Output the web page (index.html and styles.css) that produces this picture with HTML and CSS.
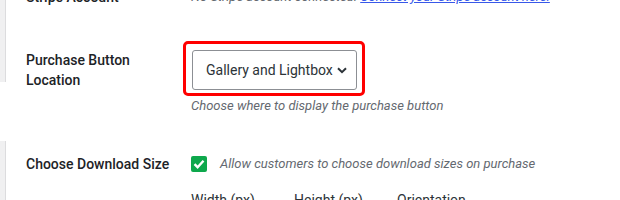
FILE: index.html
```html
<!DOCTYPE html>
<html>
<head>
    <meta charset="UTF-8">
    <title>Settings</title>
    <link rel="stylesheet" href="styles.css">
</head>
<body>
    <div class="wrap">
        <div class="rail">
            <span class="seg top"></span>
            <span class="seg bottom"></span>
        </div>
        <div class="form">
            <div class="row stripe">
                <div class="label">Stripe Account</div>
                <div class="field">
                    <p class="desc">No Stripe account connected. <a href="javascript:;">Connect your Stripe account here.</a></p>
                </div>
            </div>
            <div class="row location">
                <div class="label">Purchase Button Location</div>
                <div class="field">
                    <div class="mark">
                        <div class="select">
                            <span>Gallery and Lightbox</span>
                            <svg width="10" height="7" viewBox="0 0 10 7"><path d="M1 1.2 5 5.2 9 1.2" fill="none" stroke="#2c3338" stroke-width="2"/></svg>
                        </div>
                    </div>
                    <p class="desc">Choose where to display the purchase button</p>
                </div>
            </div>
            <div class="row sizes">
                <div class="label">Choose Download Size</div>
                <div class="field">
                    <label class="check">
                        <span class="box"><svg width="12" height="10" viewBox="0 0 12 10"><path d="M1.5 5.2 4.6 8.2 10.5 1.8" fill="none" stroke="#fff" stroke-width="2.4"/></svg></span>
                        <span class="desc">Allow customers to choose download sizes on purchase</span>
                    </label>
                    <div class="cols">
                        <span>Width (px)</span>
                        <span>Height (px)</span>
                        <span>Orientation</span>
                    </div>
                </div>
            </div>
        </div>
    </div>
</body>
</html>
```

FILE: styles.css
```css
*{margin: 0;padding: 0;box-sizing: border-box;}
body{
    background: #fff;
    font-family: Roboto, "Noto Sans", sans-serif;
    color: #1d2327;
    height: 200px;
    overflow: hidden;
}
.wrap{
    display: flex;
    height: 200px;
}
.rail{
    width: 6px;
    display: flex;
    flex-direction: column;
}
.rail .seg{
    display: block;
    background: #f0f0f1;
    border-right: 1px solid #dcdcde;
}
.rail .top{
    height: 82px;
}
.rail .bottom{
    margin-top: 59px;
    flex: 1;
}
.form{
    padding-left: 20px;
    margin-top: -13px;
}
.row{
    display: grid;
    grid-template-columns: 165px 1fr;
}
.label{
    font-size: 14px;
    font-weight: 500;
    line-height: 20px;
    width: 150px;
}
.desc{
    font-size: 13px;
    font-style: italic;
    color: #646970;
    line-height: 20px;
    white-space: nowrap;
}
.desc a{
    color: #3858e9;
}
.location{
    margin-top: 34px;
}
.location .label{
    padding-top: 9px;
}
.mark{
    display: inline-block;
    margin-left: -8px;
    border: 3px solid #f00;
    border-radius: 5px;
    padding: 6px 5px 3px 6px;
}
.select{
    display: flex;
    align-items: center;
    width: 165px;
    height: 40px;
    padding: 0 8px 0 13px;
    border: 1px solid #8c8f94;
    border-radius: 3px;
    font-size: 14px;
    color: #2c3338;
    white-space: nowrap;
}
.select svg{
    flex-shrink: 0;
    margin-left: 4px;
}
.sizes{
    margin-top: 38px;
}
.check{
    display: flex;
    align-items: center;
    gap: 13px;
}
.box{
    width: 16px;
    height: 16px;
    border-radius: 2px;
    background: #0ea84c;
    display: flex;
    align-items: center;
    justify-content: center;
}
.cols{
    display: flex;
    margin-top: 16px;
    font-size: 14px;
    color: #2c3338;
    line-height: 20px;
}
.cols span{
    width: 103px;
}
```
